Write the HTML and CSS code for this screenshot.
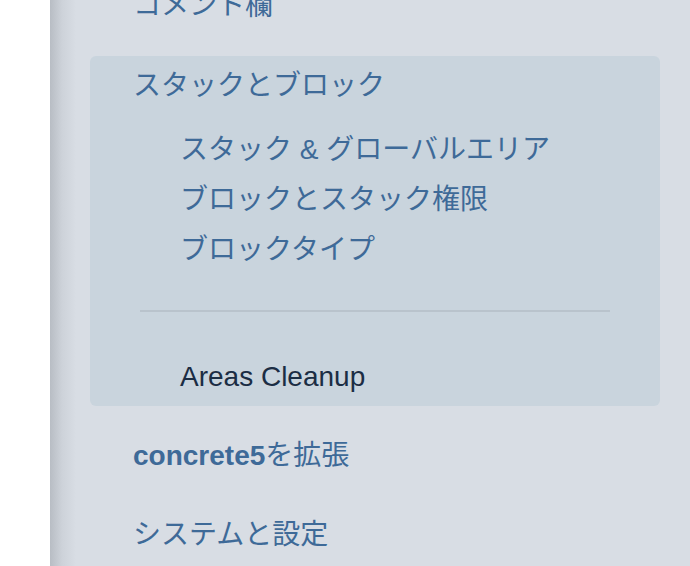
FILE: index.html
```html
<!DOCTYPE html>
<html lang="ja">
<head>
    <meta charset="UTF-8">
    <title>Dashboard Menu</title>
    <link rel="stylesheet" href="styles.css">
</head>
<body>
    <div class="page">
        <div class="gutter"></div>
        <nav class="panel">
            <div class="menu-item first">コメント欄</div>

            <div class="menu-group">
                <div class="menu-item">スタックとブロック</div>
                <ul class="sub-menu">
                    <li>スタック &amp; グローバルエリア</li>
                    <li>ブロックとスタック権限</li>
                    <li>ブロックタイプ</li>
                </ul>
                <hr class="divider">
                <ul class="sub-menu extra">
                    <li>Areas Cleanup</li>
                </ul>
            </div>

            <div class="menu-item extend"><span class="brand">concrete5</span>を拡張</div>
            <div class="menu-item system">システムと設定</div>
        </nav>
    </div>
</body>
</html>
```

FILE: styles.css
```css
html, body {
    margin: 0;
    padding: 0;
    height: 100%;
    overflow: hidden;
}
body {
    font-family: 'Liberation Sans', 'Noto Sans CJK JP', sans-serif;
    font-size: 28px;
    color: #3e6a98;
    background-color: #ffffff;
}
.page {
    display: flex;
    height: 566px;
}
.gutter {
    width: 50px;
    flex-shrink: 0;
    background-color: #ffffff;
}
.panel {
    flex: 1;
    padding: 0 30px 0 40px;
    background: linear-gradient(to right, #b8bdc4 0, #cdd2d9 12px, #d8dde4 26px, #d8dde4 100%);
}
.menu-item {
    line-height: 40px;
    padding-left: 43px;
}
.menu-item.first {
    margin-top: -14px;
}
.menu-group {
    margin-top: 30px;
    background-color: #c9d4dd;
    border-radius: 6px;
    padding: 10px 0 4px 0;
}
.sub-menu {
    list-style: none;
    margin: 19px 0 0 0;
    padding: 0 0 0 90px;
}
.sub-menu li {
    line-height: 50px;
}
.sub-menu.extra {
    margin-top: 40px;
}
.sub-menu.extra li {
    color: #1b2d44;
}
.divider {
    border: none;
    border-top: 2px solid #b9c3cc;
    margin: 35px 50px 0 50px;
    height: 0;
}
.menu-item.extend {
    margin-top: 30px;
}
.menu-item.system {
    margin-top: 39px;
}
.brand {
    font-weight: bold;
}
```
